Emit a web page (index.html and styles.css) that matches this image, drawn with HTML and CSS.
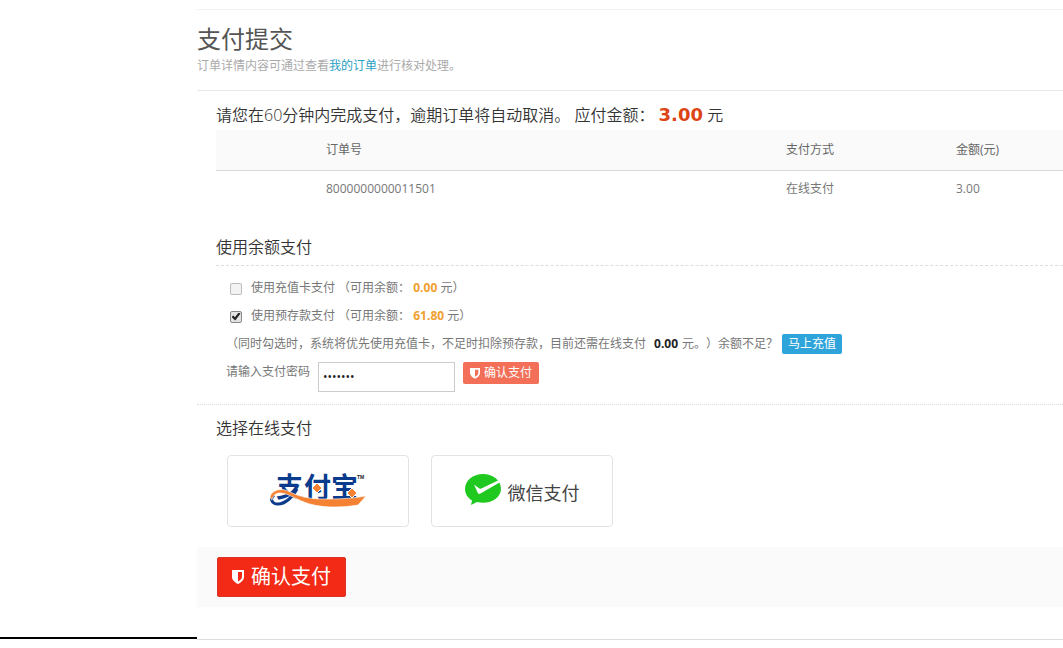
FILE: index.html
```html
<!DOCTYPE html>
<html lang="zh-CN">
<head>
<meta charset="utf-8">
<meta name="viewport" content="width=device-width, initial-scale=1">
<title>支付提交</title>
<link rel="stylesheet" href="styles.css">
</head>
<body>
<div class="layout">
  <aside class="side"></aside>
  <main class="main">
    <header class="page-head">
      <h1>支付提交</h1>
      <p>订单详情内容可通过查看<a href="#orders">我的订单</a>进行核对处理。</p>
    </header>

    <form class="pay-form">
      <section class="block">
        <p class="notice">请您在60分钟内完成支付，逾期订单将自动取消。 应付金额： <strong>3.00</strong> 元</p>
        <table class="orders">
          <thead>
            <tr><th class="col-pad"></th><th class="col-no">订单号</th><th class="col-way">支付方式</th><th>金额(元)</th></tr>
          </thead>
          <tbody>
            <tr><td></td><td>8000000000011501</td><td>在线支付</td><td>3.00</td></tr>
          </tbody>
        </table>
      </section>

      <section class="block">
        <h2 class="ruled">使用余额支付</h2>
        <div class="balance">
          <label class="row option"><input type="checkbox"><span>使用充值卡支付 （可用余额： <b>0.00</b> 元）</span></label>
          <label class="row option"><input type="checkbox" checked><span>使用预存款支付 （可用余额： <b>61.80</b> 元）</span></label>
          <p class="row hint">
            <span>（同时勾选时，系统将优先使用充值卡，不足时扣除预存款，目前还需在线支付</span>
            <strong>0.00</strong>
            <span>元。）余额不足？</span>
            <a class="recharge" href="#recharge">马上充值</a>
          </p>
          <div class="password">
            <label for="pwd">请输入支付密码</label>
            <input id="pwd" type="password" value="1234567">
            <button type="button" class="btn-small">
              <svg viewBox="0 0 12 14" width="10" height="12" aria-hidden="true"><path fill="currentColor" fill-rule="evenodd" d="M0 1h12v6c0 3-3 5.500-6 7C3 12.500 0 10 0 7zM6 3v8.600C8.500 10 10 8.800 10 7V3z"/></svg>
              确认支付
            </button>
          </div>
        </div>
      </section>

      <section class="block online">
        <h2>选择在线支付</h2>
        <div class="channels">
          <button type="button" class="channel" aria-label="支付宝">
            <svg viewBox="0 -10 96 56" width="96" height="56" aria-hidden="true">
              <g class="ali-word">
                <text x="6" y="24">支</text><text x="34" y="24">付</text><text x="61" y="24">宝</text>
              </g>
              <path fill="none" stroke="#0b3b8c" stroke-width="3" d="M27 16C23 24 15 31 8 31C1 31 0 25 4 22"/>
              <path fill="#f58233" stroke="#fff" stroke-width=".6" d="M0 24C2 17 11 14 20 19C34 26 47 26 60 26C73 26 85 25 96 23L88 32C71 35 48 35 34 29C24 25 17 20 10 20C6 20 3 22 2 27z"/>
              <path fill="#f58233" stroke="#fff" d="M47 10l5 5-5 5-5-5zM82 15l5 5-5 5-5-5z"/>
              <text class="tm" x="87" y="6">TM</text>
            </svg>
          </button>
          <button type="button" class="channel wechat">
            <svg viewBox="0 0 36 32" width="36" height="32" aria-hidden="true">
              <path fill="#20c91f" d="M18 0C8 0 0 6.500 0 15c0 5 3 9 7 11.500L6 31l6-3c2 .6 4 .8 6 .8 10 0 18-6 18-14C36 6.500 28 0 18 0z"/>
              <path fill="#fff" d="M9 10.500l5 3.800c.7.500 1.500.500 2.300.1L33 6.500l1.500 2-19 11c-1.200.8-2 .6-2.700-.5z"/>
            </svg>
            <span>微信支付</span>
          </button>
        </div>
      </section>

      <div class="submit">
        <button type="submit" class="btn-large">
          <svg viewBox="0 0 12 14" width="12" height="14" aria-hidden="true"><path fill="currentColor" fill-rule="evenodd" d="M0 0h12v7c0 3-3 5.500-6 7C3 12.500 0 10 0 7zM6 2v9.600C8.500 10 10 8.800 10 7V2z"/></svg>
          确认支付
        </button>
      </div>
    </form>
  </main>
</div>
</body>
</html>
```
FILE: styles.css
```css
* { box-sizing: border-box; }
body {
  margin: 0;
  background: #fff;
  color: #777;
  font: 12px/20px "Open Sans", "Noto Sans CJK SC", sans-serif;
  text-spacing-trim: space-all;
}
h1, h2, p { margin: 0; font-weight: 400; }
button, input { font: inherit; }
a { text-decoration: none; }

.layout { display: grid; grid-template-columns: 197px minmax(0, 1fr); }
.side { margin-bottom: 1px; border-bottom: 2px solid #000; }
.main { padding-top: 9px; border-bottom: 1px solid #ddd; }

.page-head {
  padding: 12px 0 14px;
  border-top: 1px solid #f3f3f3;
  border-bottom: 1px solid #e8e8e8;
  color: #aaa;
}
.page-head h1 { color: #555; font-size: 24px; line-height: 34px; }
.page-head a { color: #2a9fc4; }

.block { padding-left: 19px; }
.notice { padding: 11px 0 1px; color: #333; font-size: 16px; line-height: 27px; font-weight: 350; }
.notice strong { color: #dc4414; font: bold 18px/24px "DejaVu Sans", sans-serif; }

.orders { width: 100%; table-layout: fixed; border-collapse: collapse; }
.orders th, .orders td { padding: 8px 0; text-align: left; font-weight: 400; }
.orders th { height: 40px; background: #fafafa; border-bottom: 1px solid #d8d8d8; color: #666; }
.col-pad { width: 110px; }
.col-no { width: 460px; }
.col-way { width: 170px; }

h2 { color: #333; font-size: 16px; line-height: 24px; font-weight: 350; }
.ruled { margin-top: 28px; padding-bottom: 6px; border-bottom: 1px dashed #ddd; }

.balance { padding: 8px 0 12px 10px; }
.row { display: flex; align-items: center; height: 28px; }
.option { gap: 9px; padding-left: 4px; }
.option b { color: #f0a030; }
.option input {
  display: grid;
  place-items: center;
  appearance: none;
  width: 12px;
  height: 12px;
  margin: 2px 0 0;
  border: 1px solid #bbb;
  border-radius: 2px;
  background: #f3f3f3;
}
.option input:checked { border-color: #888; background: #e3e3e3; }
.option input:checked::before {
  content: "";
  width: 9px;
  height: 8px;
  background: #222;
  clip-path: polygon(0 55%, 20% 38%, 38% 58%, 80% 0, 100% 14%, 42% 100%);
}
.hint strong { margin: 0 4px 0 8px; color: #222; }
.recharge {
  margin-left: 4px;
  padding: 0 6px;
  border-radius: 2px;
  background: #2fa4da;
  color: #fff;
}
.password { display: flex; align-items: flex-start; gap: 8px; padding-top: 4px; }
.password input {
  width: 137px;
  height: 30px;
  padding: 4px;
  border: 1px solid #ccc;
  background: #fff;
  color: #222;
}
.btn-small, .btn-large {
  display: flex;
  align-items: center;
  border: 0;
  border-radius: 2px;
  color: #fff;
}
.btn-small { gap: 4px; height: 22px; padding: 0 7px; background: #f36f58; }

.online {
  padding-top: 11px;
  padding-bottom: 20px;
  border-top: 1px dotted #ddd;
}
.channels { display: flex; gap: 22px; padding: 15px 0 0 11px; }
.channel {
  display: flex;
  align-items: center;
  justify-content: center;
  gap: 7px;
  width: 182px;
  height: 72px;
  padding: 0;
  border: 1px solid #e3e3e3;
  border-radius: 4px;
  background: #fff;
  color: #444;
  font-size: 18px;
}
.wechat svg { margin-bottom: 2px; }
.wechat span { padding-top: 4px; }
.ali-word { fill: #0b3b8c; font: 700 27px/1 "Noto Sans CJK SC", sans-serif; }
.tm { fill: #222; font: bold 5px "Liberation Sans", sans-serif; }

.submit { padding: 10px 20px; margin-bottom: 32px; background: #fafafa; }
.btn-large {
  gap: 7px;
  height: 40px;
  padding: 0 14px;
  border: 1px solid #d93425;
  background: #f32a16;
  font-size: 20px;
}
```
